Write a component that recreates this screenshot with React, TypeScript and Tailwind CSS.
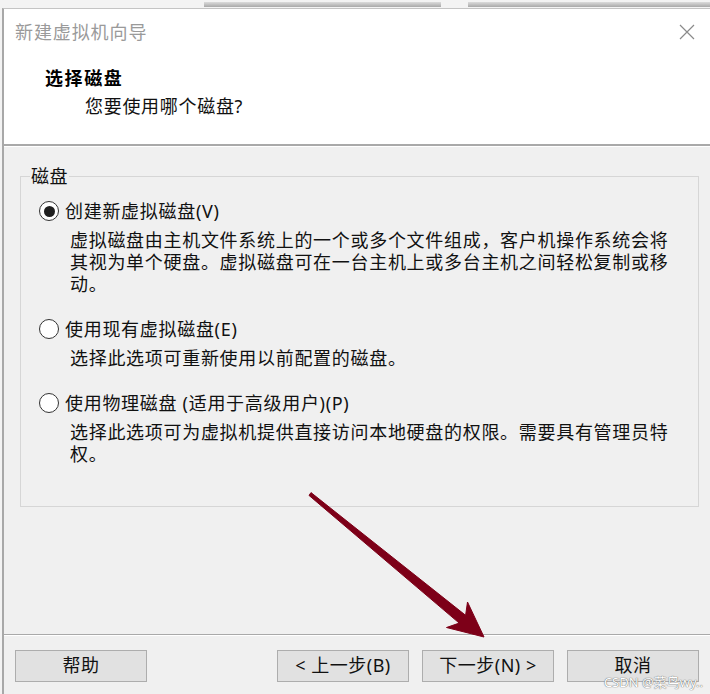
import React from "react";

const FONT = "font-['Segoe_UI','Noto_Sans','Noto_Sans_CJK_SC',sans-serif]";

function Radio({ checked }: { checked?: boolean }) {
  return (
    <span className="flex h-[20px] w-[20px] shrink-0 items-center justify-center rounded-full border-[1.5px] border-[#333333] bg-white">
      {checked ? <span className="block h-[11px] w-[11px] rounded-full bg-[#1f1f1f]" /> : null}
    </span>
  );
}

function Option({
  checked,
  label,
  lines,
  first,
}: {
  checked?: boolean;
  label: React.ReactNode;
  lines: string[];
  first?: boolean;
}) {
  return (
    <div className={first ? "" : "mt-[23px]"}>
      <div className="flex h-[22px] items-center pl-[18px]">
        <Radio checked={checked} />
        <span className="ml-[6px] leading-[22px]">{label}</span>
      </div>
      <div className="mt-[7px] pl-[49px]">
        {lines.map((l) => (
          <div key={l} className="leading-[22px] whitespace-nowrap">
            {l}
          </div>
        ))}
      </div>
    </div>
  );
}

function Btn({ children }: { children: React.ReactNode }) {
  return (
    <div className="flex h-[32px] w-[132px] items-center justify-center border border-[#adadad] bg-[#e1e1e1] pb-[2px] text-[18px] tracking-[0.5px] text-[#111]">
      {children}
    </div>
  );
}

export default function App() {
  return (
    <div
      className={`relative h-[694px] w-[710px] overflow-hidden bg-[#f3f3f3] text-[18px] tracking-[0.7px] text-[#111111] ${FONT}`}
    >
      {/* strip above window */}
      <div className="flex h-[8px]">
        <div className="w-[204px]" />
        <div className="mt-[2px] h-[5px] w-[237px] bg-gradient-to-b from-[#dcdcdc] to-[#a9a9a9]" />
        <div className="w-[27px]" />
        <div className="mt-[2px] h-[5px] flex-1 bg-gradient-to-b from-[#dcdcdc] to-[#a9a9a9]" />
      </div>

      {/* window */}
      <div className="ml-[2px] flex h-[686px] flex-col border-l-2 border-t border-l-[#a8a8a8] border-t-[#c4c4c4] bg-white">
        {/* header */}
        <div className="flex h-[135px] flex-col bg-white">
          <div className="flex h-[46px] items-center pl-[11px] pr-[15px]">
            <span className="text-[18px] tracking-[0.9px] text-[#9a9a9a]">新建虚拟机向导</span>
            <svg className="ml-auto" width="16" height="16" viewBox="0 0 16 16">
              <path d="M1 1 L15 15 M15 1 L1 15" stroke="#8a8a8a" strokeWidth="1.2" fill="none" />
            </svg>
          </div>
          <div className="mt-[11px] pl-[41px] text-[18px] font-bold leading-[24px] tracking-[1.6px] text-black">
            选择磁盘
          </div>
          <div className="mt-[4px] pl-[81px] leading-[24px]">您要使用哪个磁盘?</div>
        </div>
        <div className="h-[2px] bg-[#a9a9a9]" />
        <div className="h-[1px] bg-white" />

        {/* body */}
        <div className="h-[487px] bg-[#f0f0f0] pl-[16px] pr-[11px]">
          <fieldset className="mt-[17px] border border-[#d6d6d6] pb-[41px]">
            <legend className="ml-[9px] px-[1px] leading-[24px] tracking-[0.5px]">磁盘</legend>
            <div className="pt-[12px]">
              <Option
                first
                checked
                label="创建新虚拟磁盘(V)"
                lines={[
                  "虚拟磁盘由主机文件系统上的一个或多个文件组成，客户机操作系统会将",
                  "其视为单个硬盘。虚拟磁盘可在一台主机上或多台主机之间轻松复制或移",
                  "动。",
                ]}
              />
              <Option label="使用现有虚拟磁盘(E)" lines={["选择此选项可重新使用以前配置的磁盘。"]} />
              <Option
                label="使用物理磁盘 (适用于高级用户)(P)"
                lines={[
                  "选择此选项可为虚拟机提供直接访问本地硬盘的权限。需要具有管理员特",
                  "权。",
                ]}
              />
            </div>
          </fieldset>
        </div>

        <div className="h-[1px] bg-[#a9a9a9]" />
        <div className="h-[1px] bg-white" />

        {/* footer */}
        <div className="flex flex-1 bg-[#f0f0f0] pl-[11px] pr-[11px] pt-[14px]">
          <Btn>帮助</Btn>
          <div className="ml-auto flex gap-[13px]">
            <Btn>&lt; 上一步(B)</Btn>
            <Btn>下一步(N) &gt;</Btn>
            <Btn>取消</Btn>
          </div>
        </div>
      </div>

      {/* annotation arrow */}
      <svg className="pointer-events-none absolute left-0 top-0" width="710" height="694" viewBox="0 0 710 694">
        <polygon
          points="311,492.6 465.6,615.3 467.5,602 484,637 446.5,627.5 459.2,623.1 309,495.4"
          fill="#7d0018"
          stroke="#7d0018"
          strokeWidth="1"
          strokeLinejoin="round"
        />
      </svg>

      {/* watermark */}
      <div className="pointer-events-none absolute bottom-[5px] right-[7px] text-[13px] leading-[14px] tracking-normal text-white [text-shadow:0_0_1px_#6b6b6b,0_0_1px_#6b6b6b]">
        CSDN @菜鸟wy..
      </div>
    </div>
  );
}
